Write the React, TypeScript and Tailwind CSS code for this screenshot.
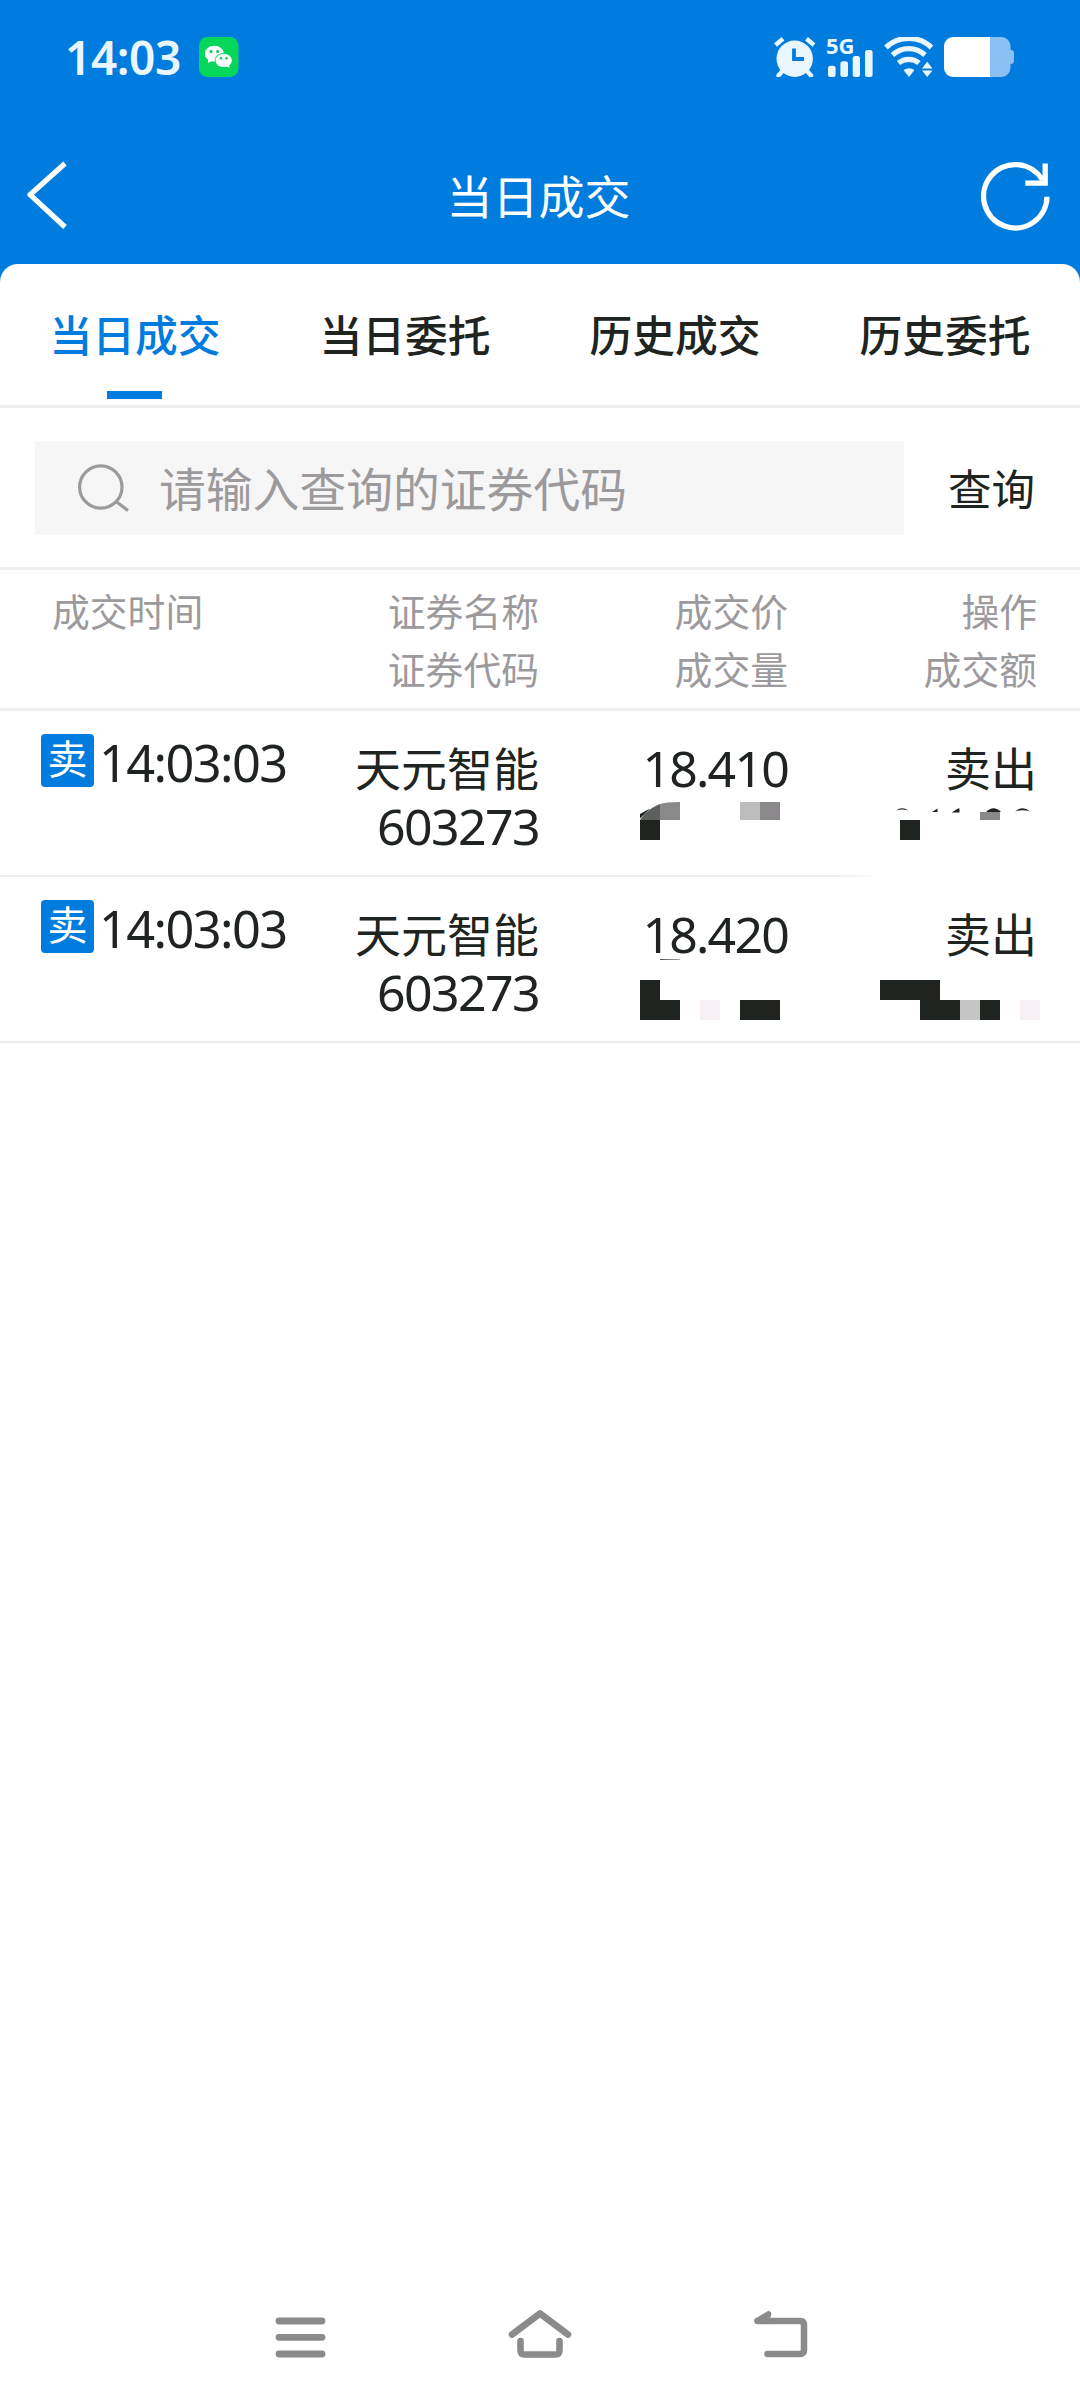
type Block = { x: number; y: number; w: number; h?: number; fill: string };

type Trade = {
  id: number;
  time: string;
  name: string;
  code: string;
  price: string;
  action: string;
};

const tabs = ['当日成交', '当日委托', '历史成交', '历史委托'];

const trades: Trade[] = [
  { id: 1, time: '14:03:03', name: '天元智能', code: '603273', price: '18.410', action: '卖出' },
  { id: 2, time: '14:03:03', name: '天元智能', code: '603273', price: '18.420', action: '卖出' },
];

const INK = '#202420';

// masked volume and amount, in 20px cells
const masks: Record<number, Block[]> = {
  1: [
    { x: 100, y: 0, w: 20, h: 18, fill: '#bdbdbd' },
    { x: 120, y: 0, w: 20, h: 18, fill: '#8b888c' },
    { x: 0, y: 18, w: 20, fill: INK },
    { x: 340, y: 10, w: 20, h: 8, fill: '#8b888c' },
    { x: 260, y: 18, w: 20, fill: INK },
  ],
  2: [
    { x: 0, y: 12, w: 20, fill: INK },
    { x: 0, y: 32, w: 40, fill: INK },
    { x: 60, y: 32, w: 20, fill: '#f7f1f5' },
    { x: 100, y: 32, w: 40, fill: INK },
    { x: 240, y: 12, w: 60, fill: INK },
    { x: 280, y: 32, w: 40, fill: INK },
    { x: 320, y: 32, w: 20, fill: '#c5c5c5' },
    { x: 340, y: 32, w: 20, fill: INK },
    { x: 380, y: 32, w: 20, fill: '#f7f1f5' },
  ],
};

function StatusBar() {
  return (
    <div className="h-[114px] flex items-start justify-between pl-[65px] pr-[66px] pt-[37px]">
      <div className="flex items-center h-10">
        <span className="w-[134px] text-[46px] leading-10 font-semibold tracking-[-0.4px] text-[#eaf6ff]">14:03</span>
        <svg width="40" height="40" viewBox="0 0 40 40">
          <rect width="39.5" height="40" rx="8.5" fill="#06d75a" />
          <ellipse cx="15.3" cy="16.7" rx="9.4" ry="8" fill="#fff" />
          <path d="M9 21 9 26 14 23.5Z" fill="#fff" />
          <ellipse cx="24.7" cy="23.4" rx="9" ry="7.5" fill="#06d75a" />
          <ellipse cx="24.7" cy="23.4" rx="8.2" ry="6.7" fill="#fff" />
          <path d="M27 29 30.5 31 30 27Z" fill="#fff" />
          <g fill="#06c755">
            <circle cx="12" cy="14.5" r="1.5" />
            <circle cx="18.7" cy="14.5" r="1.5" />
            <circle cx="22" cy="21.3" r="1.2" />
            <circle cx="27.5" cy="21.3" r="1.2" />
          </g>
        </svg>
      </div>

      <div className="flex items-start h-10 text-[#eaf6ff]">
        <svg width="42" height="40" viewBox="0 0 42 40" className="mr-[10px]">
          <circle cx="20.7" cy="21.7" r="18.2" fill="currentColor" />
          <g stroke="currentColor" strokeWidth="4.4">
            <path d="M1.5 8 9 1.8M32.5 1.8 40 8" />
            <path d="M8 34.5 4.5 38.5M33.5 34.5 37 38.5" strokeLinecap="round" />
          </g>
          <path d="M20 11.5V22H30" fill="none" stroke="#007cde" strokeWidth="3.8" />
        </svg>
        <div className="w-[58px] h-10">
          <div className="h-[13px] text-[22px] leading-[16px] font-bold">5G</div>
          <svg width="48" height="27" viewBox="0 0 48 27" fill="currentColor">
            <rect x="2" y="15.7" width="7.6" height="11.3" rx="2.5" />
            <rect x="14.4" y="11.2" width="7.6" height="15.8" rx="2.5" />
            <rect x="26.7" y="6" width="7.3" height="21" rx="2.5" />
            <rect x="39" y="0" width="7.6" height="27" rx="2.5" />
          </svg>
        </div>
        <svg width="50" height="40" viewBox="0 0 50 40" className="mr-[10px]">
          <g fill="none" stroke="currentColor" strokeWidth="5.2">
            <path d="M2 10.5A33 33 0 0 1 47.5 10.5" />
            <path d="M8.5 18A24 24 0 0 1 41 18" />
            <path d="M14.5 26A16 16 0 0 1 35 26" />
          </g>
          <path d="M19.5 33Q25 29.5 30.5 33L25 40Z" fill="currentColor" />
          <path d="M38 31.5 43.2 24.7 48.5 31.5ZM38 33.5H48.5L43.2 40Z" fill="currentColor" />
        </svg>
        <svg width="70" height="40" viewBox="0 0 70 40">
          <path d="M46 0H57.5A9 9 0 0 1 66.5 9V13Q70 13 70 16V24Q70 27 66.5 27V31A9 9 0 0 1 57.5 40H46Z" fill="#8bc0f4" />
          <path d="M9 0H46V40H9A9 9 0 0 1 0 31V9A9 9 0 0 1 9 0Z" fill="#fff" />
        </svg>
      </div>
    </div>
  );
}

function TitleBar() {
  return (
    <div className="h-[150px] flex items-start justify-between pl-[25px] pr-[28px] pt-[44px] text-white">
      <svg width="74" height="76" viewBox="0 0 74 76" fill="none" stroke="currentColor" strokeWidth="5.2">
        <path d="M40 5.5 5 36.7 40 69" strokeLinejoin="round" />
      </svg>
      <h1 className="text-[46px] leading-[77px] font-normal">当日成交</h1>
      <svg width="74" height="76" viewBox="0 0 74 76" fill="none" stroke="currentColor" strokeWidth="5.3">
        <path d="M69 38.7A31.7 31.7 0 1 1 64.5 22" />
        <path d="M67.2 5.5V25.2H47.3" />
      </svg>
    </div>
  );
}

function TopEdges() {
  return (
    <svg width="400" height="60" viewBox="0 0 400 60">
      <path d="M0 18C5 10 11 6 20 2V18Z" fill="#5c5f5b" />
      <path d="M20 2Q25 0 40 0V18H20Z" fill="#8b888c" />
      <path d="M0 12 10 6.5 0 16.5Z" fill={INK} />
      <g fill={INK}>
        <path d="M256 8.5Q262 4 268.5 8.5Q262 6.500 256 8.5Z" />
        <path d="M292 10 297.5 6.5V10Z" />
        <path d="M311.5 10.5 318 6.5H319.5V10.5Z" />
        <path d="M346 10Q353.5 2.5 361 10Z" />
        <path d="M375 9.5Q382.5 3 390 9.5Q382.5 7 375 9.5Z" />
      </g>
    </svg>
  );
}

function TradeRow({ trade }: { trade: Trade }) {
  const first = trade.id === 1;
  return (
    <li className="relative h-[166px] flex flex-col justify-between">
      <div className="grid grid-cols-[290px_249px_249px_249px] pt-[23px] text-[46px] leading-[58px] text-[#202420] text-right">
        <div className="flex items-start pl-[41px]">
          <span className="size-[53px] rounded bg-[#007cde] text-white text-[40px] leading-[50px] text-center">卖</span>
          <span className="pl-[5px] text-[50.5px] leading-[57px] tracking-[-1.6px] whitespace-nowrap">{trade.time}</span>
        </div>
        <div className="pt-[5px]">
          <p>{trade.name}</p>
          <p className="text-[50px] tracking-[-1.6px]">{trade.code}</p>
        </div>
        <p className="pt-[5px] text-[50px] tracking-[-1.8px]">{trade.price}</p>
        <p className="pt-[5px]">{trade.action}</p>
      </div>
      <div className={first ? 'h-0.5 w-[880px] bg-linear-to-r from-[#eee] from-95% to-white' : 'h-0.5 bg-[#eee]'} />
      <div className="absolute left-[640px] top-[91px]">
        {first && <div className="absolute"><TopEdges /></div>}
        <svg width="400" height="60" viewBox="0 0 400 60" shapeRendering="crispEdges">
          {masks[trade.id].map((b, i) => (
            <rect key={i} x={b.x} y={b.y} width={b.w} height={b.h ?? 20} fill={b.fill} />
          ))}
        </svg>
      </div>
      {!first && <div className="absolute left-[660px] top-[82px] w-5 h-px bg-linear-to-r from-[#555] to-[#aaa]" />}
    </li>
  );
}

function NavBar() {
  return (
    <nav className="h-[96px] flex justify-center gap-[177px] text-[#8c8a8c]">
      <svg width="60" height="60" viewBox="0 0 60 60" fill="none" stroke="currentColor" strokeWidth="6.8" strokeLinecap="round">
        <path d="M9 17H52M9 33.3H52M9 50H52" />
      </svg>
      <svg width="66" height="60" viewBox="0 0 66 60" fill="none" stroke="currentColor" strokeWidth="6.6" strokeLinecap="round" strokeLinejoin="round">
        <path d="M5 30.5 33 9.5 61 30.5" />
        <path d="M13.5 37V46Q13.5 50.5 17.5 50.5H48.5Q52.5 50.5 52.5 46V37" />
      </svg>
      <svg width="60" height="60" viewBox="0 0 60 60" fill="none" stroke="currentColor" strokeWidth="6.5" strokeLinecap="round" strokeLinejoin="round">
        <path d="M7.5 17H50Q54 17 54 21V46Q54 50 50 50H17.5" />
        <path d="M7.5 16.5 18.5 9.8" strokeWidth="5.5" />
        <path d="M8.5 18 20.5 10.5 19 15Z" fill="currentColor" strokeWidth="1.5" />
      </svg>
    </nav>
  );
}

export default function App() {
  return (
    <div className="w-[1080px] h-[2400px] flex flex-col bg-[#007cde] overflow-hidden font-['Noto_Sans','Noto_Sans_CJK_SC',sans-serif]">
      <StatusBar />
      <TitleBar />

      <main className="flex-1 flex flex-col bg-white rounded-t-[18px]">
        <div className="h-[144px] grid grid-cols-4 border-b-[3px] border-[#eee]">
          {tabs.map((tab, i) => (
            <button key={tab} className={`flex flex-col items-center pt-[42px] text-[42.8px] leading-[60px] font-medium ${i === 0 ? 'text-[#007cde]' : 'text-[#202420]'}`}>
              {tab}
              {i === 0 && <span className="mt-[25px] mr-px w-[55px] h-2 bg-[#007cde]" />}
            </button>
          ))}
        </div>

        <div className="h-[162px] flex items-center border-b-[3px] border-[#eee] pl-[35px]">
          <div className="w-[869px] h-[94px] mt-px flex items-center bg-[#f6f6f6] pl-[43px]">
            <svg width="52" height="50" viewBox="0 0 52 50" fill="none" stroke="#9c9a9c" strokeWidth="3.2">
              <circle cx="22.8" cy="24" r="21.2" />
              <path d="M38 38.5 50 47.5" />
            </svg>
            <span className="pl-[29px] pt-px text-[46.8px] leading-[60px] text-[#9c9a9c]">请输入查询的证券代码</span>
          </div>
          <button className="pl-[44px] pt-[3px] text-[43.5px] leading-[60px] text-[#202420]">查询</button>
        </div>

        <div className="h-[141px] grid grid-cols-[290px_249px_249px_249px] pt-[13px] border-b-[3px] border-[#eee] text-[37.8px] leading-[58px] text-[#9c9a9c] text-right">
          <p className="pl-[52px] text-left">成交时间</p>
          <p>证券名称<br />证券代码</p>
          <p>成交价<br />成交量</p>
          <p>操作<br />成交额</p>
        </div>

        <ul className="flex-1">
          {trades.map(trade => (
            <TradeRow key={trade.id} trade={trade} />
          ))}
        </ul>

        <NavBar />
      </main>
    </div>
  );
}
